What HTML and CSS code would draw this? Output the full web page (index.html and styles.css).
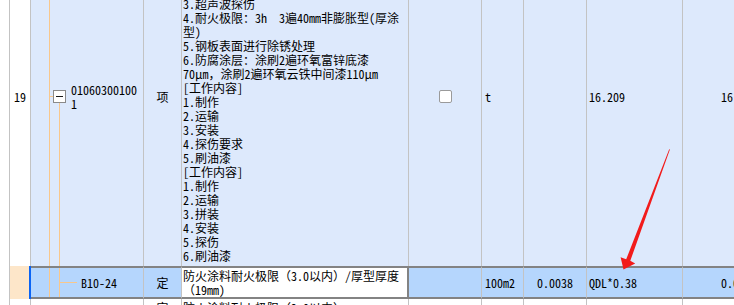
FILE: index.html
```html
<!DOCTYPE html>
<html lang="zh-CN">
<head>
<meta charset="utf-8">
<title>清单</title>
<link rel="stylesheet" href="styles.css">
</head>
<body>
<div class="sheet">
  <div class="grid">
    <!-- row 19 -->
    <div class="cell gut"></div>
    <div class="cell num">19</div>
    <div class="cell code">
      <span class="lead"></span>
      <span class="guide short"><i class="tick"></i></span>
      <span class="node"><i class="gap"></i><b class="toggle"><i class="minus"></i></b><i class="stem"></i></span>
      <span class="codetext">01060300100<br>1</span>
    </div>
    <div class="cell kind">项</div>
    <div class="cell desc">
      <div class="ln">[项目特征]</div>
      <div class="ln">1.钢材品种、规格：Q345B</div>
      <div class="ln">2.构件类型：钢柱</div>
      <div class="ln">3.单根重量：详见图纸</div>
      <div class="ln">2.焊缝质量等级：一级</div>
      <div class="ln">3.超声波探伤</div>
      <div class="ln">4.耐火极限：3h  3遍40mm非膨胀型(厚涂</div>
      <div class="ln">型)</div>
      <div class="ln">5.钢板表面进行除锈处理</div>
      <div class="ln">6.防腐涂层：涂刷2遍环氧富锌底漆</div>
      <div class="ln">70μm，涂刷2遍环氧云铁中间漆110μm</div>
      <div class="ln">[工作内容]</div>
      <div class="ln">1.制作</div>
      <div class="ln">2.运输</div>
      <div class="ln">3.安装</div>
      <div class="ln">4.探伤要求</div>
      <div class="ln">5.刷油漆</div>
      <div class="ln">[工作内容]</div>
      <div class="ln">1.制作</div>
      <div class="ln">2.运输</div>
      <div class="ln">3.拼装</div>
      <div class="ln">4.安装</div>
      <div class="ln">5.探伤</div>
      <div class="ln">6.刷油漆</div>
    </div>
    <div class="cell chk"><span class="checkbox"></span></div>
    <div class="cell unit">t</div>
    <div class="cell qty"></div>
    <div class="cell expr">16.209</div>
    <div class="cell val">16.209</div>

    <!-- selected sub-row -->
    <div class="cell gut sel-gut"></div>
    <div class="cell num sel-num"></div>
    <div class="cell code sel">
      <span class="lead"></span>
      <span class="guide"></span>
      <span class="branch"><i class="hline"></i></span>
      <span class="subcode">B10-24</span>
    </div>
    <div class="cell kind sel">定</div>
    <div class="cell desc sel edit">
      <div class="ln">防火涂料耐火极限（3.0以内）/厚型厚度</div>
      <div class="ln">（19mm)</div>
    </div>
    <div class="cell chk sel"></div>
    <div class="cell unit sel">100m2</div>
    <div class="cell qty sel">0.0038</div>
    <div class="cell expr sel">QDL*0.38</div>
    <div class="cell val sel">0.0616</div>

    <!-- next sub-row (cut off) -->
    <div class="cell gut nx"></div>
    <div class="cell num nx"></div>
    <div class="cell code nx">
      <span class="lead"></span>
      <span class="guide"></span>
      <span class="branch"></span>
    </div>
    <div class="cell kind nx">定</div>
    <div class="cell desc nx">
      <div class="ln">防火涂料耐火极限（2.0以内）</div>
      <div class="ln">厚型厚度</div>
    </div>
    <div class="cell chk nx"></div>
    <div class="cell unit nx"></div>
    <div class="cell qty nx"></div>
    <div class="cell expr nx"></div>
    <div class="cell val nx"></div>
  </div>

  <svg class="arrow" width="734" height="305" viewBox="0 0 734 305" aria-hidden="true">
    <polygon points="669.9,149.4 630.3,260.8 635.2,263.6 623.5,269.4 620.6,257.3 626.2,259.3 669.2,149.2" fill="#f21b1b"/>
  </svg>
</div>
</body>
</html>
```

FILE: styles.css
```css
html, body {
  margin: 0;
  padding: 0;
}

body {
  width: 734px;
  height: 305px;
  overflow: hidden;
  background: #ffffff;
  color: #000000;
  font-family: "Noto Sans Mono CJK SC", "Noto Sans CJK SC", sans-serif;
  font-size: 12px;
  line-height: 14px;
}

.sheet {
  position: relative;
  width: 734px;
  height: 305px;
  overflow: hidden;
}

.grid {
  display: grid;
  grid-template-columns: 10px 21px 113px 38px 227px 73px 42px 63px 96px 78px;
  width: 761px;
  margin-top: -73px;
}

.cell {
  box-sizing: border-box;
  border-right: 1px solid #c3c3c3;
  background: #dde9fc;
  display: flex;
  align-items: center;
  white-space: nowrap;
}

.gut {
  background: #ffffff;
}

.num {
  background: #ffffff;
  justify-content: center;
}

/* code column with tree guides */
.code {
  align-items: stretch;
}

.lead {
  width: 18px;
  flex: none;
}

.guide {
  box-sizing: border-box;
  width: 10px;
  flex: none;
  border-left: 1px solid #f8c78c;
  display: flex;
  align-items: center;
}

.guide.short {
  width: 4px;
}

.tick {
  display: block;
  width: 3px;
  height: 1px;
  background: #f8c78c;
}

.node {
  width: 13px;
  flex: none;
  display: flex;
  flex-direction: column;
}

.gap {
  flex: 1;
}

.stem {
  flex: 1;
  width: 1px;
  margin-left: 6px;
  background: #f8c78c;
}

.toggle {
  box-sizing: border-box;
  width: 13px;
  height: 13px;
  border: 1px solid #8a8a8a;
  background: #ffffff;
  display: flex;
  align-items: center;
  justify-content: center;
}

.minus {
  display: block;
  width: 7px;
  height: 1px;
  background: #1a1a1a;
}

.codetext {
  align-self: center;
  margin-left: 5px;
}

.branch {
  box-sizing: border-box;
  width: 18px;
  flex: none;
  border-left: 1px solid #f8c78c;
  display: flex;
  align-items: center;
}

.hline {
  display: block;
  width: 17px;
  height: 1px;
  background: #f8c78c;
}

.subcode {
  align-self: center;
  margin-left: 4px;
}

.kind {
  justify-content: center;
}

.desc {
  flex-direction: column;
  align-items: stretch;
  padding: 0 0 3px 1px;
}

.ln {
  height: 14px;
  white-space: pre;
}

.chk {
  justify-content: center;
}

.checkbox {
  box-sizing: border-box;
  width: 13px;
  height: 13px;
  border: 1px solid #9a9a9a;
  border-radius: 2px;
  background: #ffffff;
}

.unit {
  padding-left: 3px;
}

.qty {
  justify-content: center;
}

.expr {
  padding-left: 2px;
}

.val {
  justify-content: flex-end;
  padding-right: 3px;
}

/* selected row */
.sel {
  background: #b5d6fd;
  border-top: 2px solid #838383;
  border-bottom: 2px solid #838383;
}

.sel-gut {
  background: #ffffff;
}

.sel-num {
  background: #fde6c9;
  border-right: 2px solid #0a64f5;
}

.desc.sel {
  padding: 1px 0 0 1px;
  justify-content: flex-start;
}

.edit {
  background: #ffffff;
  border-right: 2px solid #838383;
}

/* next row, mostly below the fold */
.nx {
  background: #ffffff;
  align-items: flex-start;
  padding-top: 2px;
  height: 40px;
}

.desc.nx {
  padding: 2px 0 0 1px;
}

.arrow {
  position: absolute;
  left: 0;
  top: 0;
  pointer-events: none;
}
```
